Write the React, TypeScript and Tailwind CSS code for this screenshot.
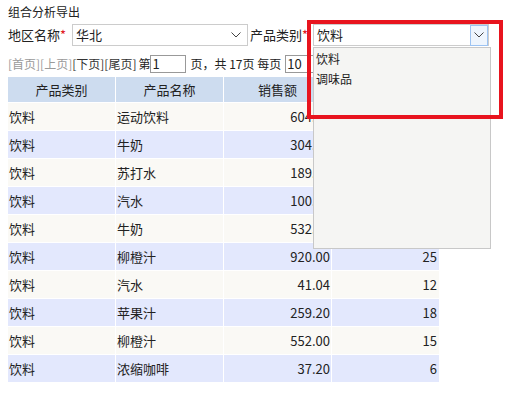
import React from "react";

const rows = [
  ["饮料", "运动饮料", "604.80", "18"],
  ["饮料", "牛奶", "304.00", "16"],
  ["饮料", "苏打水", "189.00", "14"],
  ["饮料", "汽水", "100.80", "20"],
  ["饮料", "牛奶", "532.00", "28"],
  ["饮料", "柳橙汁", "920.00", "25"],
  ["饮料", "汽水", "41.04", "12"],
  ["饮料", "苹果汁", "259.20", "18"],
  ["饮料", "柳橙汁", "552.00", "15"],
  ["饮料", "浓缩咖啡", "37.20", "6"],
];

const Chevron = () => (
  <svg width="10" height="6" viewBox="0 0 10 6" fill="none">
    <path d="M0.5 0.5 L5 5 L9.5 0.5" stroke="#444" strokeWidth="1" />
  </svg>
);

const Star = () => <span className="text-[#e0141e]">*</span>;

const App = () => {
  return (
    <div
      className="relative w-[507px] h-[410px] bg-white text-[#222] overflow-hidden"
      style={{ fontFamily: '"Noto Sans CJK SC", "Noto Sans", sans-serif' }}
    >
      <div className="px-[8px] pt-[4px] text-[12px] leading-[16px]">组合分析导出</div>

      {/* filter row */}
      <div className="flex items-center h-[22px] mt-[4px] pl-[8px] text-[13px] leading-[22px]">
        <span className="w-[64px] whitespace-nowrap">
          地区名称<Star />
        </span>
        <div className="flex items-center justify-between w-[176px] h-[22px] border border-[#cccccc] pl-[3px] pr-[6px]">
          <span>华北</span>
          <Chevron />
        </div>
        <span className="ml-[2px] w-[63px] whitespace-nowrap">
          产品类别<Star />
        </span>
        <div className="flex items-center justify-between w-[176px] h-[22px] border border-[#cccccc] pl-[3px]">
          <span>饮料</span>
          <div className="flex items-center justify-center w-[18px] h-[21px] border border-[#9cc3f2] bg-[#eef5fd]">
            <Chevron />
          </div>
        </div>
      </div>

      {/* pager */}
      <div className="flex items-center h-[18px] mt-[9px] pl-[8px] text-[12px] leading-[18px] whitespace-nowrap">
        <span className="text-[#9a9a9a]">[首页][上页]</span>
        <span className="text-[#333]">[下页][尾页]</span>
        <span className="ml-[2px]">第</span>
        <div className="w-[36px] h-[18px] border border-[#999] pl-[1px] text-[13px] leading-[16px]">1</div>
        <span className="ml-[4px]">页，共 17页 每页</span>
        <div className="ml-[4px] w-[34px] h-[18px] border border-[#999] pl-[1px] text-[13px] leading-[16px]">10</div>
      </div>

      {/* table */}
      <div className="mt-[4px] ml-[8px] flex flex-col gap-y-px text-[13px]">
        <div className="grid grid-cols-[107px_107px_107px_107px] gap-x-px h-[25px] leading-[25px]">
          <div className="bg-[#cddcef] text-center">产品类别</div>
          <div className="bg-[#cddcef] text-center">产品名称</div>
          <div className="bg-[#cddcef] text-center">销售额</div>
          <div className="bg-[#cddcef] text-center">销售量</div>
        </div>
        {rows.map((r, i) => {
          const bg = i % 2 === 0 ? "bg-[#faf9f5]" : "bg-[#e3e8fd]";
          return (
            <div key={i} className="grid grid-cols-[107px_107px_107px_107px] gap-x-px h-[27px] leading-[27px]">
              <div className={`${bg} pl-[1px]`}>{r[0]}</div>
              <div className={`${bg} pl-[1px]`}>{r[1]}</div>
              <div className={`${bg} text-right pr-px`}>{r[2]}</div>
              <div className={`${bg} text-right pr-[2px]`}>{r[3]}</div>
            </div>
          );
        })}
      </div>

      {/* open dropdown list */}
      <div className="absolute left-[313px] top-[47px] w-[178px] h-[202px] bg-[#f5f5f3] border border-[#c8c8c8] pl-[2px] pt-[1px] text-[12px] leading-[20px]">
        <div>饮料</div>
        <div>调味品</div>
      </div>

      {/* highlight frame */}
      <div className="absolute left-[307px] top-[20px] w-[196px] h-[99px] border-4 border-[#e8141e]" />
    </div>
  );
};

export default App;
